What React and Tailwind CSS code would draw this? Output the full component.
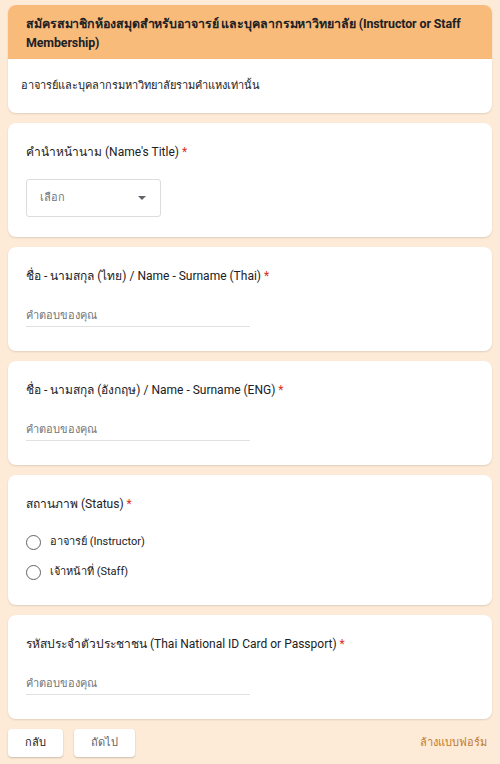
const font = { fontFamily: "Roboto, 'Noto Sans', sans-serif" };

const Star = () => <span className="text-[#d93025]"> *</span>;

const Card = ({ children, className = "" }) => (
  <div className={`bg-white rounded-lg shadow-[0_1px_2px_rgba(0,0,0,0.12)] ${className}`}>{children}</div>
);

const TextQuestion = ({ title }) => (
  <Card className="px-[18px] pt-[20px] pb-[24px]">
    <div className="text-[12px] text-[#202124] leading-[18px]">
      {title}
      <Star />
    </div>
    <div className="mt-[23px] w-[224px] border-b border-[#e0e0e0] pb-[2px] text-[11px] text-[#70757a] leading-[16px]">
      คำตอบของคุณ
    </div>
  </Card>
);

const Radio = ({ label }) => (
  <div className="flex items-center gap-[9px] h-[30px]">
    <span className="w-[15px] h-[15px] rounded-full border-[1.5px] border-[#5f6368]" />
    <span className="text-[11px] text-[#202124]">{label}</span>
  </div>
);

export default function App() {
  return (
    <div className="w-[500px] h-[764px] bg-[#fdebd7] overflow-hidden" style={font}>
      <div className="px-[8px] pt-[5px] flex flex-col gap-[10px]">
        <Card className="overflow-hidden">
          <div className="bg-[#f8bb7a] pl-[18px] pr-[10px] pt-[9px] pb-[7px] text-[12.4px] font-bold text-[#202124] leading-[19px] tracking-[-0.1px]">
            สมัครสมาชิกห้องสมุดสำหรับอาจารย์ และบุคลากรมหาวิทยาลัย (Instructor or Staff Membership)
          </div>
          <div className="px-[13px] pt-[19px] pb-[19px] text-[11px] text-[#202124] leading-[16px]">
            อาจารย์และบุคลากรมหาวิทยาลัยรามคำแหงเท่านั้น
          </div>
        </Card>

        <Card className="px-[18px] pt-[20px] pb-[20px]">
          <div className="text-[12px] text-[#202124] leading-[18px]">
            คำนำหน้านาม (Name's Title)
            <Star />
          </div>
          <div className="mt-[18px] w-[135px] h-[38px] border border-[#dadce0] rounded-[3px] flex items-center justify-between pl-[13px] pr-[14px]">
            <span className="text-[11px] text-[#70757a]">เลือก</span>
            <svg width="8" height="4" viewBox="0 0 10 5">
              <path d="M0 0 L5 5 L10 0 Z" fill="#5f6368" />
            </svg>
          </div>
        </Card>

        <TextQuestion title="ชื่อ - นามสกุล (ไทย) / Name - Surname (Thai)" />
        <TextQuestion title="ชื่อ - นามสกุล (อังกฤษ) / Name - Surname (ENG)" />

        <Card className="px-[18px] pt-[20px] pb-[18px]">
          <div className="text-[12px] text-[#202124] leading-[18px]">
            สถานภาพ (Status)
            <Star />
          </div>
          <div className="mt-[14px] flex flex-col">
            <Radio label="อาจารย์ (Instructor)" />
            <Radio label="เจ้าหน้าที่ (Staff)" />
          </div>
        </Card>

        <TextQuestion title="รหัสประจำตัวประชาชน (Thai National ID Card or Passport)" />

        <div className="flex items-center gap-[11px]">
          <button className="w-[55px] h-[28px] bg-white rounded-[4px] shadow-[0_1px_2px_rgba(0,0,0,0.2)] text-[11px] text-[#202124] font-medium">
            กลับ
          </button>
          <button className="w-[61px] h-[28px] bg-white rounded-[4px] shadow-[0_1px_2px_rgba(0,0,0,0.2)] text-[11px] text-[#5f6368] font-medium">
            ถัดไป
          </button>
          <span className="ml-auto mr-[5px] text-[11px] font-medium text-[#c07a2f]">ล้างแบบฟอร์ม</span>
        </div>
      </div>
    </div>
  );
}
